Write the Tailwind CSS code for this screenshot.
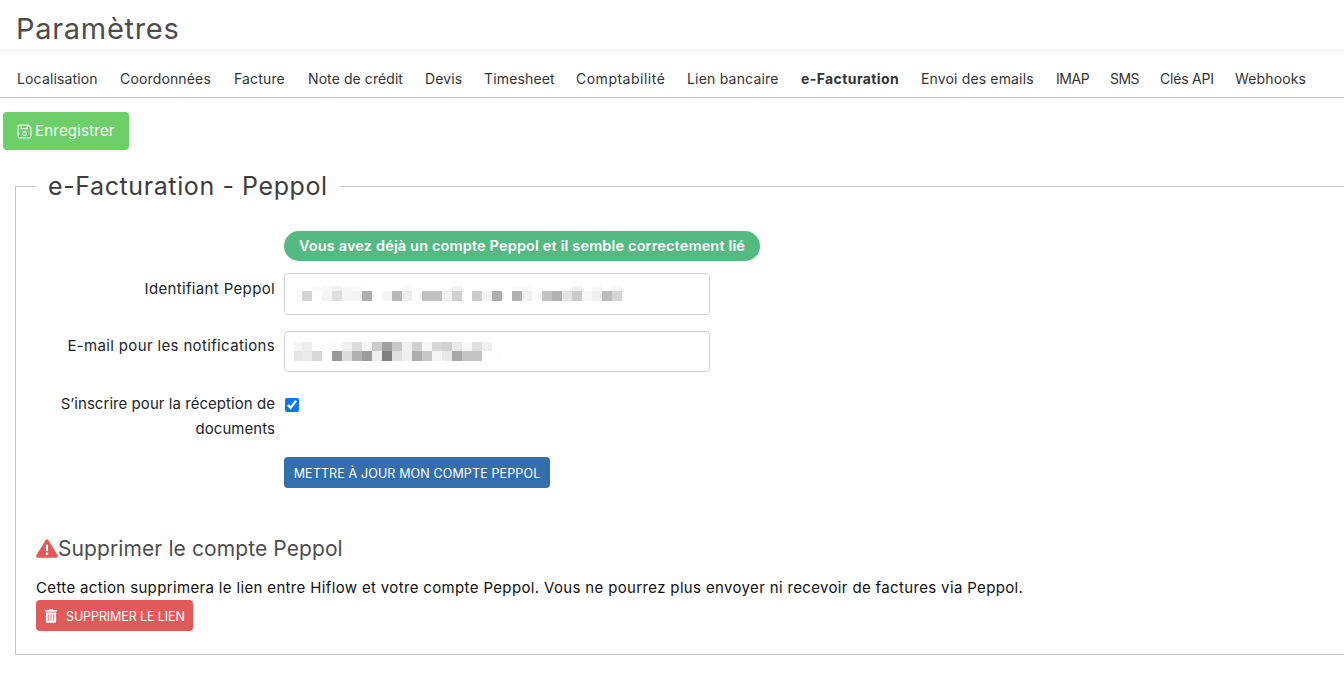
<!DOCTYPE html>
<html lang="fr">
<head>
  <meta charset="UTF-8" />
  <title>Paramètres</title>
  <script src="https://cdn.jsdelivr.net/npm/@tailwindcss/browser@4"></script>
</head>
<body class="bg-white font-['Inter',sans-serif] text-[15px] tracking-[0.35px] text-[#212529] overflow-hidden">
  <div class="h-[51px] border-b border-[#eeeeee] pl-4 pt-[10px] text-[29px] tracking-[0.7px] leading-[38px] text-[#4d4d4d]">Paramètres</div>

  <nav class="h-[47px] border-b border-[#c4c4c4] pl-[17px] pt-[19px] flex gap-[22px] text-[14px] tracking-[0.15px] leading-[17px] whitespace-nowrap text-[#333333]">
    <a class="w-[81px]">Localisation</a>
    <a class="w-[92px]">Coordonnées</a>
    <a class="w-[52px]">Facture</a>
    <a class="w-[95px] tracking-[0.08px]">Note de crédit</a>
    <a class="w-[37px]">Devis</a>
    <a class="w-[70px]">Timesheet</a>
    <a class="w-[89px] tracking-[0.5px]">Comptabilité</a>
    <a class="w-[92px] tracking-[0.2px]">Lien bancaire</a>
    <a class="w-[98px] font-bold tracking-[0.4px]">e-Facturation</a>
    <a class="w-[113px]">Envoi des emails</a>
    <a class="w-[32px] tracking-[-0.4px]">IMAP</a>
    <a class="w-[28px] tracking-[-0.6px]">SMS</a>
    <a class="w-[53px] tracking-[-0.2px]">Clés API</a>
    <a class="w-[71px]">Webhooks</a>
  </nav>

  <div class="pl-[3px] pt-[14px]">
    <button class="h-[38px] w-[126px] rounded-[4px] bg-[#6ccf67] text-white text-[15px] tracking-[0.2px] flex items-center pl-[14px] gap-[3px]">
      <svg class="w-[15px] h-[15px]" viewBox="0 0 14 14" fill="none" stroke="currentColor" stroke-width="1">
        <path d="M2 1h8.500l2.500 2.500v8a1.500 1.500 0 0 1-1.500 1.500h-9A1.500 1.500 0 0 1 1 11.500v-9A1.500 1.500 0 0 1 2 1z" />
        <path d="M4 1.500v3h5.500v-3" />
        <circle cx="7" cy="9" r="1.800" />
      </svg>
      Enregistrer
    </button>
  </div>

  <fieldset class="ml-[15px] mt-[20px] h-[485px] border border-[#c4c4c4] border-r-0 pl-[20px]">
    <legend class="px-[12px] text-[25px] tracking-[0.6px] leading-[32px] text-[#3d3d3d]">e-Facturation - Peppol</legend>

    <div class="grid grid-cols-[239px_1fr] gap-x-[9px] mt-[29px]">
      <div></div>
      <div>
        <span class="inline-block h-[30px] w-[476px] rounded-full bg-[#55b982] text-center text-[14.5px] tracking-[0.15px] font-semibold leading-[30px] text-white">Vous avez déjà un compte Peppol et il semble correctement lié</span>
      </div>

      <label class="mt-[15px] text-right leading-[25px]">Identifiant Peppol</label>
      <div class="mt-[12px] w-[426px] h-[42px] rounded-[4px] border border-[#ced4da] flex items-center">
        <svg class="ml-[17px]" width="320" height="16" viewBox="0 0 320 16">
          <rect x="10" y="0" width="10" height="5" fill="#fbfbfb" />
          <rect x="20" y="0" width="10" height="5" fill="#f6f6f6" />
          <rect x="30" y="0" width="10" height="5" fill="#f2f2f2" />
          <rect x="40" y="0" width="10" height="5" fill="#f8f8f8" />
          <rect x="50" y="0" width="10" height="5" fill="#fbfbfb" />
          <rect x="100" y="0" width="10" height="5" fill="#fbfbfb" />
          <rect x="150" y="0" width="10" height="5" fill="#f0f0f0" />
          <rect x="210" y="0" width="10" height="5" fill="#fbfbfb" />
          <rect x="220" y="0" width="10" height="5" fill="#fafafa" />
          <rect x="270" y="0" width="10" height="5" fill="#f0f0f0" />
          <rect x="290" y="0" width="10" height="5" fill="#f8f8f8" />
          <rect x="310" y="0" width="10" height="5" fill="#f8f8f8" />

          <rect x="0" y="5" width="10" height="10" fill="#d4d4d4" />
          <rect x="20" y="5" width="10" height="10" fill="#f4f4f4" />
          <rect x="30" y="5" width="10" height="10" fill="#dedede" />
          <rect x="40" y="5" width="10" height="10" fill="#f6f6f6" />
          <rect x="50" y="5" width="10" height="10" fill="#f4f4f4" />
          <rect x="60" y="5" width="10" height="10" fill="#aeaeae" />
          <rect x="80" y="5" width="10" height="10" fill="#f6f6f6" />
          <rect x="90" y="5" width="10" height="10" fill="#b8b8b8" />
          <rect x="100" y="5" width="10" height="10" fill="#eeeeee" />
          <rect x="120" y="5" width="20" height="10" fill="#c0c0c0" />
          <rect x="140" y="5" width="10" height="10" fill="#f2f2f2" />
          <rect x="150" y="5" width="10" height="10" fill="#d0d0d0" />
          <rect x="170" y="5" width="10" height="10" fill="#cccccc" />
          <rect x="180" y="5" width="10" height="10" fill="#f2f2f2" />
          <rect x="190" y="5" width="10" height="10" fill="#aeaeae" />
          <rect x="210" y="5" width="10" height="10" fill="#b0b0b0" />
          <rect x="220" y="5" width="10" height="10" fill="#f0f0f0" />
          <rect x="230" y="5" width="10" height="10" fill="#fbfbfb" />
          <rect x="240" y="5" width="10" height="10" fill="#c4c4c4" />
          <rect x="250" y="5" width="10" height="10" fill="#b0b0b0" />
          <rect x="260" y="5" width="10" height="10" fill="#e4e4e4" />
          <rect x="270" y="5" width="10" height="10" fill="#cccccc" />
          <rect x="280" y="5" width="10" height="10" fill="#f8f8f8" />
          <rect x="290" y="5" width="10" height="10" fill="#f0f0f0" />
          <rect x="300" y="5" width="10" height="10" fill="#bcbcbc" />
          <rect x="310" y="5" width="10" height="10" fill="#d4d4d4" />
        </svg>
      </div>

      <label class="mt-[18px] text-right leading-[25px]">E-mail pour les notifications</label>
      <div class="mt-[16px] w-[426px] h-[41px] rounded-[4px] border border-[#ced4da] flex items-center">
        <svg class="ml-[7px]" width="210" height="19" viewBox="0 0 210 19">
          <rect x="2" y="0" width="8" height="9" fill="#f4f4f4" />
          <rect x="10" y="0" width="10" height="9" fill="#eeeeee" />
          <rect x="30" y="0" width="10" height="9" fill="#fdfdfd" />
          <rect x="40" y="0" width="10" height="9" fill="#fdfdfd" />
          <rect x="50" y="0" width="10" height="9" fill="#f0f0f0" />
          <rect x="60" y="0" width="10" height="9" fill="#dcdcdc" />
          <rect x="70" y="0" width="10" height="9" fill="#f4f4f4" />
          <rect x="80" y="0" width="10" height="9" fill="#cccccc" />
          <rect x="90" y="0" width="10" height="9" fill="#a0a0a0" />
          <rect x="100" y="0" width="10" height="9" fill="#c8c8c8" />
          <rect x="110" y="0" width="10" height="9" fill="#f0f0f0" />
          <rect x="120" y="0" width="10" height="9" fill="#d0d0d0" />
          <rect x="130" y="0" width="10" height="9" fill="#f6f6f6" />
          <rect x="140" y="0" width="10" height="9" fill="#d8d8d8" />
          <rect x="150" y="0" width="10" height="9" fill="#d0d0d0" />
          <rect x="160" y="0" width="10" height="9" fill="#e8e8e8" />
          <rect x="170" y="0" width="10" height="9" fill="#f8f8f8" />
          <rect x="180" y="0" width="10" height="9" fill="#e0e0e0" />
          <rect x="190" y="0" width="10" height="9" fill="#f0f0f0" />

          <rect x="2" y="9" width="8" height="10" fill="#e6e6e6" />
          <rect x="10" y="9" width="10" height="10" fill="#eaeaea" />
          <rect x="20" y="9" width="10" height="10" fill="#d8d8d8" />
          <rect x="30" y="9" width="10" height="10" fill="#fdfdfd" />
          <rect x="40" y="9" width="10" height="10" fill="#999999" />
          <rect x="50" y="9" width="10" height="10" fill="#dcdcdc" />
          <rect x="60" y="9" width="10" height="10" fill="#b0b0b0" />
          <rect x="70" y="9" width="10" height="10" fill="#9c9c9c" />
          <rect x="80" y="9" width="10" height="10" fill="#eeeeee" />
          <rect x="90" y="9" width="10" height="10" fill="#808080" />
          <rect x="100" y="9" width="10" height="10" fill="#e0e0e0" />
          <rect x="110" y="9" width="10" height="10" fill="#f0f0f0" />
          <rect x="120" y="9" width="10" height="10" fill="#adadad" />
          <rect x="130" y="9" width="10" height="10" fill="#c8c8c8" />
          <rect x="140" y="9" width="10" height="10" fill="#f6f6f6" />
          <rect x="150" y="9" width="10" height="10" fill="#e8e8e8" />
          <rect x="160" y="9" width="10" height="10" fill="#a8a8a8" />
          <rect x="170" y="9" width="20" height="10" fill="#c4c4c4" />
          <rect x="190" y="9" width="20" height="10" fill="#fdfdfd" />
        </svg>
      </div>

      <label class="mt-[19px] text-right leading-[25px] tracking-[0.05px]">S’inscrire pour la réception de documents</label>
      <div class="mt-[19px] pl-[1px] pt-[7px]">
        <input type="checkbox" checked class="block w-[14px] h-[14px] accent-[#0b76ef]" />
      </div>

      <div></div>
      <div class="mt-[16px]">
        <button class="h-[31px] w-[266px] rounded-[4px] bg-[#326fac] pt-[3px] text-[12.5px] tracking-[0.13px] text-white">METTRE À JOUR MON COMPTE PEPPOL</button>
      </div>
    </div>

    <div class="mt-[47px] flex items-center text-[21px] tracking-[0.1px] leading-[27px] text-[#4d4d4d]">
      <svg class="w-[22px] h-[21px]" viewBox="0 0 512 512" preserveAspectRatio="none" fill="#e05a5a">
        <path d="M256 32c14 0 27 8 34 20l216 368c7 12 7 27 0 39s-20 21-34 21H40c-14 0-27-8-34-20s-7-27 0-40L222 52c7-12 20-20 34-20zm0 128c-13 0-24 11-24 24v112c0 13 11 24 24 24s24-11 24-24V184c0-13-11-24-24-24zm32 224a32 32 0 1 0-64 0 32 32 0 1 0 64 0z" />
      </svg>
      Supprimer le compte Peppol
    </div>
    <p class="mt-[15px] leading-[21px] text-[#111111]">Cette action supprimera le lien entre Hiflow et votre compte Peppol. Vous ne pourrez plus envoyer ni recevoir de factures via Peppol.</p>
    <button class="mt-[2px] h-[31px] w-[157px] rounded-[4px] bg-[#e05a5a] text-[12.5px] tracking-[-0.1px] text-white flex items-center pl-[9px] gap-[9px]">
      <svg class="w-[12px] h-[14px]" viewBox="0 0 448 512" fill="currentColor">
        <path d="M135 18c5-11 16-18 29-18h120c13 0 24 7 29 18l7 14h96c18 0 32 14 32 32s-14 32-32 32H32C14 96 0 82 0 64s14-32 32-32h96l7-14zM32 128h384v320c0 35-29 64-64 64H96c-35 0-64-29-64-64V128zm88 64c-9 0-16 7-16 16v224c0 9 7 16 16 16s16-7 16-16V208c0-9-7-16-16-16zm104 0c-9 0-16 7-16 16v224c0 9 7 16 16 16s16-7 16-16V208c0-9-7-16-16-16zm104 0c-9 0-16 7-16 16v224c0 9 7 16 16 16s16-7 16-16V208c0-9-7-16-16-16z" />
      </svg>
      <span class="pt-[3px]">SUPPRIMER LE LIEN</span>
    </button>
  </fieldset>
</body>
</html>
